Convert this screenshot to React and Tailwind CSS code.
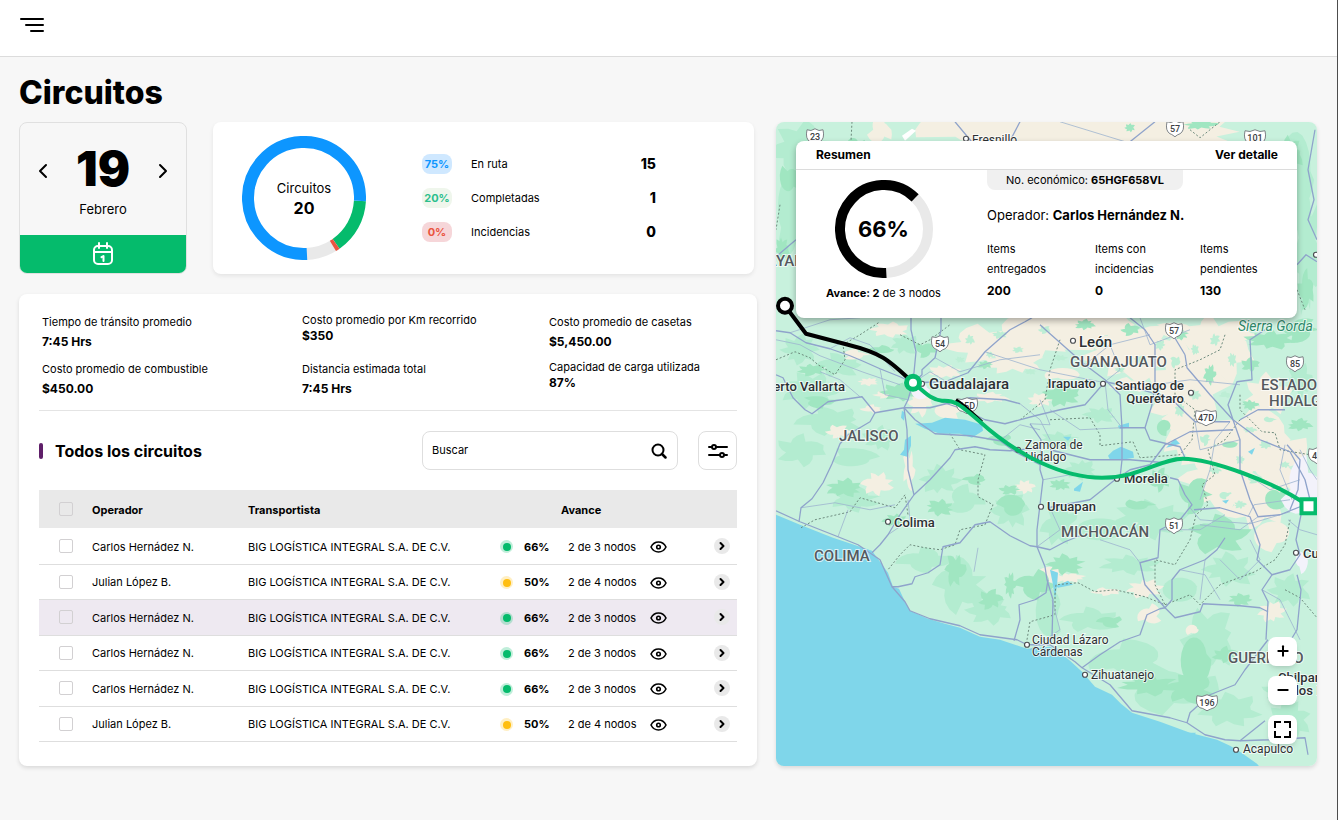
import { useState } from "react";
import { Check, ChevronLeft, ChevronRight, Minus, Plus } from "lucide-react";

const summary = [
    { percent: "75%", label: "En ruta", total: 15, chip: "bg-[#cfe8ff] text-[#0d96ff]" },
    { percent: "20%", label: "Completadas", total: 1, chip: "bg-[#eff6ec] text-[#2cbf8d]" },
    { percent: "0%", label: "Incidencias", total: 0, chip: "bg-[#f6d6d9] text-[#ea5440]" },
];

const metrics = [
    { label: "Tiempo de tránsito promedio", value: "7:45 Hrs", leading: "leading-5" },
    { label: "Costo promedio por Km recorrido", value: "$350", leading: "leading-4" },
    { label: "Costo promedio de casetas", value: "$5,450.00", leading: "leading-5" },
    { label: "Costo promedio de combustible", value: "$450.00", leading: "leading-5" },
    { label: "Distancia estimada total", value: "7:45 Hrs", leading: "leading-5" },
    { label: "Capacidad de carga utilizada", value: "87%", leading: "leading-4" },
];

const carrier = "BIG LOGÍSTICA INTEGRAL S.A. DE C.V.";

const circuits = [
    { id: 1, operator: "Carlos Hernádez N.", percent: "66%", nodes: "2 de 3 nodos", ok: true },
    { id: 2, operator: "Julian López B.", percent: "50%", nodes: "2 de 4 nodos", ok: false },
    { id: 3, operator: "Carlos Hernádez N.", percent: "66%", nodes: "2 de 3 nodos", ok: true },
    { id: 4, operator: "Carlos Hernádez N.", percent: "66%", nodes: "2 de 3 nodos", ok: true },
    { id: 5, operator: "Carlos Hernádez N.", percent: "66%", nodes: "2 de 3 nodos", ok: true },
    { id: 6, operator: "Julian López B.", percent: "50%", nodes: "2 de 4 nodos", ok: false },
];

const items = [
    { top: "Items", bottom: "entregados", value: 200 },
    { top: "Items con", bottom: "incidencias", value: 0 },
    { top: "Items", bottom: "pendientes", value: 130 },
];

/* ---------- Map data ---------- */

// [x, y, rx, ry]
const sand = [
    [1060, 128, 130, 26], [1150, 132, 90, 22], [985, 130, 60, 22], [880, 130, 12, 16], [1080, 325, 80, 22],
    [985, 345, 44, 18], [1025, 340, 44, 20], [1130, 350, 56, 30], [1010, 362, 30, 12], [1185, 385, 40, 48],
    [1215, 350, 36, 34], [1245, 440, 52, 30], [1222, 480, 44, 34], [1190, 430, 26, 34], [1270, 455, 36, 26],
    [1255, 500, 34, 28], [1270, 395, 24, 20], [1275, 535, 20, 15], [920, 402, 13, 14], [890, 330, 18, 7],
    [877, 484, 15, 12], [909, 470, 6, 20], [872, 409, 11, 4], [838, 432, 12, 7], [1025, 487, 10, 7],
    [1051, 574, 14, 8], [1145, 589, 18, 9], [1150, 615, 12, 10], [1193, 630, 7, 6], [1272, 612, 14, 10],
    [1070, 578, 14, 5], [1105, 592, 14, 4], [950, 410, 16, 8], [990, 398, 18, 5], [1040, 400, 12, 7],
    [1240, 335, 18, 10], [855, 355, 14, 5], [1290, 480, 22, 14], [868, 382, 10, 4], [885, 395, 12, 4],
    [1065, 375, 18, 7], [1130, 385, 20, 7], [945, 372, 16, 7], [1180, 330, 24, 8], [1205, 455, 26, 18],
];

const midGreen = [
    [800, 150, 32, 26], [788, 215, 14, 40], [800, 350, 20, 14], [840, 365, 22, 12], [810, 390, 30, 18],
    [830, 420, 32, 14], [800, 450, 24, 16], [850, 460, 28, 10], [880, 438, 16, 12], [855, 500, 24, 12],
    [1300, 180, 18, 50], [1308, 250, 14, 60], [1150, 520, 36, 20], [1100, 530, 30, 14], [1060, 525, 18, 20],
    [925, 560, 26, 12], [960, 585, 24, 26], [990, 610, 22, 14], [1050, 610, 14, 24], [1090, 620, 26, 12],
    [1130, 660, 40, 18], [1170, 690, 46, 22], [1210, 640, 26, 30], [1230, 710, 30, 16], [1180, 590, 20, 14],
    [1230, 570, 26, 16], [1290, 590, 22, 16], [940, 480, 20, 14], [965, 500, 18, 14], [1010, 510, 18, 18],
    [1080, 470, 16, 10], [1100, 415, 16, 8], [1300, 380, 12, 16], [1060, 440, 18, 8],
    [905, 345, 14, 10], [1130, 565, 28, 10], [1290, 720, 20, 20], [1280, 690, 18, 10],
];

const deepGreen = [
    [790, 180, 10, 16], [782, 250, 7, 12], [855, 150, 10, 16], [900, 392, 20, 9], [812, 370, 14, 6],
    [820, 402, 16, 6], [845, 488, 18, 9], [955, 570, 10, 16], [990, 600, 12, 10], [1035, 585, 20, 14],
    [1012, 508, 14, 12], [1062, 396, 18, 11], [1165, 427, 8, 8], [1195, 495, 16, 18], [1220, 535, 30, 18],
    [1065, 565, 18, 10], [1060, 485, 10, 6], [1195, 660, 14, 24], [1150, 685, 30, 10], [1190, 690, 24, 14],
    [1110, 622, 12, 6], [1225, 655, 12, 8], [1270, 340, 24, 9], [1300, 330, 18, 12], [1290, 155, 14, 18],
    [1306, 290, 8, 20], [1240, 160, 24, 10], [1200, 125, 16, 5], [1130, 128, 5, 4], [1250, 365, 9, 7],
    [1210, 375, 6, 10], [1250, 405, 8, 5], [925, 350, 10, 8], [985, 365, 8, 4], [1000, 440, 12, 6],
    [1130, 330, 9, 6], [1085, 325, 10, 5], [1180, 335, 8, 5], [940, 508, 14, 8], [895, 520, 12, 6],
    [1160, 480, 10, 12], [1230, 445, 10, 4], [1275, 498, 12, 12], [1140, 505, 14, 6], [1010, 490, 10, 5],
    [1300, 425, 12, 6], [880, 350, 12, 4], [975, 480, 12, 5], [1240, 600, 12, 6], [1010, 585, 6, 12],
];

// Farmland specks over the sandy plains
const specks = [
    [1000, 335, 7, 4], [1018, 350, 6, 3], [1045, 330, 6, 4], [1100, 345, 8, 3], [1060, 358, 7, 3],
    [1140, 360, 6, 4], [1160, 345, 5, 5], [1175, 362, 5, 6], [1195, 395, 6, 5], [1180, 410, 5, 7],
    [1215, 340, 5, 6], [1232, 360, 4, 7], [1225, 395, 6, 3], [1250, 430, 7, 3], [1265, 445, 6, 4],
    [1240, 460, 4, 5], [1215, 470, 6, 4], [1205, 440, 5, 6], [1225, 495, 6, 4], [1255, 480, 8, 4],
    [1240, 505, 6, 4], [1270, 420, 6, 3], [1290, 400, 5, 5], [1285, 465, 5, 3], [970, 340, 5, 5],
    [990, 355, 4, 3], [1030, 372, 6, 3], [960, 360, 5, 3], [1120, 370, 5, 3], [1195, 350, 4, 5],
];

const highways = [
    "776,331 790,333 806,343 830,349 850,356 862,361 880,369 900,377 913,383",
    "913,383 916,352 911,330 911,318",
    "913,383 922,375 922,370 935,358 941,330 941,318",
    "913,383 945,382 968,373 985,352 1010,330 1025,322 1032,318",
    "913,383 935,400 965,410 985,420 1005,424 1035,416 1060,410 1085,405 1105,382",
    "776,375 783,378 793,398 805,410 812,414 828,402 862,397 875,413 870,422 848,435 840,444 832,464 823,483 812,499 801,508 799,522",
    "913,383 908,400 904,408 875,413",
    "904,408 907,430 908,470 914,495 900,515 888,535 880,545 872,553",
    "904,408 915,420 935,434 970,436 1000,441 1015,452 1040,465",
    "904,408 930,408 970,398 1005,400 1020,404",
    "914,495 930,480 950,458 955,450 975,447 990,450 1010,451 1040,448",
    "776,511 800,522 838,537 858,545 880,560 892,587 898,587 912,584 915,577 928,573 940,565 943,547 960,543 975,525 990,522 1010,536 1030,546 1037,547",
    "892,587 905,602 910,611 930,619 960,626 980,635 1017,640 1027,645 1050,645 1075,662 1082,668 1110,685 1132,711 1170,718 1187,723 1205,735 1225,740 1240,741 1265,721",
    "1037,547 1037,530 1043,480 1040,470 1041,440 1030,424",
    "1037,547 1045,567 1047,580 1053,600 1052,638",
    "1014,641 1020,620 1019,605 1035,600 1046,593 1048,580",
    "1037,547 1050,550 1065,542 1080,536",
    "1082,668 1100,655 1120,642 1140,635 1147,615 1160,609 1165,608 1175,618 1200,612 1203,604 1240,606 1260,608 1268,612",
    "1165,608 1172,600 1172,580 1180,570 1205,560 1217,550 1225,538",
    "1165,608 1145,585 1140,563 1158,558 1160,530 1180,520 1192,505 1185,495 1178,480 1170,478",
    "1040,325 1050,334 1085,365 1105,380 1120,395 1122,428 1122,460 1120,478",
    "1120,428 1145,428 1152,405 1155,385 1155,345 1145,330 1130,318",
    "1105,382 1135,388 1170,398 1195,422 1230,422",
    "1145,428 1150,440 1180,447 1185,458",
    "1185,355 1187,368 1210,395 1233,420 1260,440 1290,452 1305,480 1310,500",
    "1173,335 1185,355",
    "1233,420 1228,405 1237,382 1252,380 1250,340 1265,330",
    "1233,420 1240,440 1240,470 1250,500 1258,517 1280,515 1300,507",
    "1048,508 1090,500 1115,480 1130,470 1150,465 1165,445 1190,432 1233,430",
    "1050,450 1090,460 1130,460 1165,463 1180,459",
    "1194,510 1220,508 1250,517 1260,545 1257,560 1272,575 1290,570 1300,555 1296,540 1302,510",
    "1272,575 1262,590 1268,602 1266,640",
    "1297,575 1301,590 1297,630 1285,650",
    "1187,723 1190,713 1210,695 1235,685 1245,670 1268,640",
    "1240,741 1270,740 1305,738 1308,755",
    "955,122 970,140 1000,180",
    "1020,122 1010,141",
    "1155,122 1130,142",
    "1315,130 1308,170 1314,200 1308,220 1317,240",
    "1297,265 1306,255 1317,262",
    "776,257 790,245 796,240",
    "1240,420 1258,410 1285,410",
    "1287,445 1300,460 1298,490 1290,510",
];

const backRoads = [
    "790,333 830,320 860,318", "830,349 850,338 870,345 895,372", "880,369 885,395 908,400", "860,397 840,380 820,372",
    "935,358 960,372 1000,360 1040,355", "1000,441 1020,425 1040,430", "985,352 1040,370 1100,382", "1085,365 1110,345 1150,335",
    "1155,385 1190,380 1240,385", "1140,318 1150,345 1190,330", "1195,422 1200,450 1240,440", "1050,508 1060,530 1037,547",
    "1043,480 1070,475 1115,480", "1050,410 1080,430 1120,428", "848,510 838,537", "801,508 835,503 870,510 895,505",
    "888,535 910,520 908,500", "978,548 974,572", "1160,530 1200,530 1225,515", "1180,570 1205,575 1220,600",
    "1220,560 1240,580 1260,560 1250,540", "1240,470 1270,490 1300,480", "1230,422 1215,440 1210,470 1200,500", "1262,590 1280,600 1300,640",
    "1100,540 1130,550 1140,563", "1205,560 1200,600", "1060,122 1135,145", "1258,517 1240,530 1200,525", "1030,650 1060,630 1052,600",
    "776,340 800,345 820,356 862,372 900,385", "913,383 930,372 960,390 1000,388", "1020,404 1040,420 1050,440",
    "1190,508 1200,520 1250,524 1290,512", "1248,517 1254,505 1290,500", "1285,445 1280,470 1292,500", "1300,450 1310,470 1317,480",
    "1288,520 1300,530 1317,535", "1105,382 1108,410 1122,428", "1110,345 1120,370 1105,382", "1040,400 1050,425 1030,424",
];

const stateBorders = [
    "776,360 795,352 810,358 818,365 835,375 845,360 843,345 860,335 880,322",
    "900,335 920,345 930,340 950,325", "780,205 776,230", "852,122 851,141",
    "950,434 960,450 985,455 978,480 978,497 993,505 985,525 960,530 955,545 940,550 925,548 910,545 900,555 888,570",
    "801,528 815,520 850,512 860,498 895,508 905,495 908,515", "1020,420 1045,400 1050,370 1060,340",
    "1050,420 1090,418 1100,435 1100,446 1133,442 1140,458 1180,455 1192,440 1195,410 1175,395 1175,370 1200,360 1220,350 1225,335",
    "1240,420 1225,440 1208,450 1215,475 1202,485 1208,505 1196,515 1190,540 1175,565 1155,560 1155,585 1165,605",
    "1055,595 1056,585 1078,583 1095,592 1115,590 1145,597 1165,605", "1027,640 1030,622 1055,615 1055,595",
    "1165,605 1190,595 1200,605 1220,585 1255,572 1275,560 1285,545 1290,520", "1240,395 1240,410 1262,432 1275,433 1280,450 1310,455",
    "1285,590 1300,598 1317,618", "1190,130 1200,138 1220,122", "1297,290 1305,310",
];

const water = [
    "915,424 932,423 945,418 965,420 982,425 983,431 972,438 960,434 940,434 925,429",
    "1108,456 1113,451 1121,447 1133,452 1134,458 1122,460 1110,460",
    "905,440 911,436 911,446 907,457 900,455 904,450",
    "1118,426 1129,423 1129,428 1119,429", "1050,570 1058,573 1057,586 1055,600 1053,585",
    "1056,586 1068,581 1073,585 1058,588", "1166,448 1175,439 1180,444 1170,447", "1074,489 1083,482 1080,492 1074,491",
    "902,411 905,413 904,421 901,418", "1222,501 1229,500 1226,504", "1248,452 1255,448 1252,455", "1188,733 1196,733 1193,737",
    "1063,437 1071,437 1068,441",
];

const coast = "M776 515 L800 525 L833 538 L872 551 L888 573 L893 587 L899 589 L905 602 L910 611 L928 619 L945 624 L960 628 L980 637 L1000 640 L1012 644 L1027 649 L1050 647 L1060 653 L1070 661 L1082 672 L1095 687 L1112 695 L1121 704 L1132 713 L1160 722 L1190 733 L1217 740 L1230 746 L1240 752 L1257 764 L1262 770 L770 770 L770 513 Z";

const cities = [
    { x: 1073, y: 341, lx: 1079, ly: 347, size: 15, weight: 500, lines: ["León"] },
    { x: 922, y: 384, lx: 929, ly: 389, size: 15, weight: 500, lines: ["Guadalajara"] },
    { x: 1103, y: 384, lx: 1096, ly: 388, size: 13, weight: 500, end: true, lines: ["Irapuato"] },
    { x: 1191, y: 393, lx: 1184, ly: 390, size: 13, weight: 500, end: true, lines: ["Santiago de", "Querétaro"] },
    { x: 770, y: 384, lx: 845, ly: 391, size: 13, weight: 500, end: true, lines: ["Puerto Vallarta"] },
    { x: 1018, y: 450, lx: 1025, ly: 449, size: 12, weight: 400, lines: ["Zamora de", "Hidalgo"] },
    { x: 1117, y: 479, lx: 1124, ly: 483, size: 13, weight: 500, lines: ["Morelia"] },
    { x: 1041, y: 507, lx: 1047, ly: 511, size: 13, weight: 500, lines: ["Uruapan"] },
    { x: 888, y: 522, lx: 894, ly: 527, size: 13, weight: 500, lines: ["Colima"] },
    { x: 1296, y: 553, lx: 1303, ly: 558, size: 13, weight: 500, lines: ["Cuernavaca"] },
    { x: 1027, y: 645, lx: 1032, ly: 644, size: 12, weight: 400, lines: ["Ciudad Lázaro", "Cárdenas"] },
    { x: 1085, y: 675, lx: 1091, ly: 679, size: 12, weight: 400, lines: ["Zihuatanejo"] },
    { x: 1272, y: 690, lx: 1278, ly: 682, size: 13, weight: 500, lines: ["Chilpancingo", "de los Bravo"] },
    { x: 1236, y: 750, lx: 1243, ly: 753, size: 12, weight: 400, lines: ["Acapulco"] },
    { x: 966, y: 139, lx: 972, ly: 144, size: 12, weight: 400, lines: ["Fresnillo"] },
    { x: 1316, y: 255, lx: 1322, ly: 255, size: 12, weight: 400, lines: [] },
];

const states = [
    { name: "NAYARIT", x: 756, y: 266 },
    { name: "JALISCO", x: 839, y: 441 },
    { name: "COLIMA", x: 814, y: 561 },
    { name: "GUANAJUATO", x: 1070, y: 367 },
    { name: "MICHOACÁN", x: 1061, y: 537 },
    { name: "ESTADO DE", x: 1261, y: 390 },
    { name: "HIDALGO", x: 1269, y: 406 },
    { name: "GUERRERO", x: 1228, y: 663 },
];

const shields = [
    { n: "23", x: 815, y: 137, w: 16 },
    { n: "57", x: 1175, y: 129, w: 16 },
    { n: "101", x: 1255, y: 138, w: 20 },
    { n: "54", x: 940, y: 344, w: 16 },
    { n: "15D", x: 967, y: 406, w: 20 },
    { n: "57", x: 1174, y: 331, w: 16 },
    { n: "85", x: 1295, y: 364, w: 16 },
    { n: "47D", x: 1206, y: 418, w: 20 },
    { n: "45", x: 1317, y: 456, w: 16 },
    { n: "51", x: 1174, y: 526, w: 16 },
    { n: "196", x: 1207, y: 703, w: 20 },
];

// Irregular outline around a centre, the same on every render
function patch([x, y, rx, ry]) {
    const points = [];
    for (let i = 0; i < 22; i++) {
        const noise = Math.abs(Math.sin(x * 12.9 + y * 78.2 + i * 37.7) * 437.5) % 1;
        const radius = 0.55 + noise * 0.65;
        const angle = (i / 22) * Math.PI * 2;
        points.push(`${(x + Math.cos(angle) * rx * radius).toFixed(1)},${(y + Math.sin(angle) * ry * radius).toFixed(1)}`);
    }
    return points.join(" ");
}

/* ---------- Icons ---------- */

function MenuIcon() {
    return (
        <svg width="26" height="16" viewBox="0 0 26 16" fill="none" stroke="#000" strokeWidth="2" strokeLinecap="round">
            <path d="M2 2h22M7 8h17M12 14h12" />
        </svg>
    );
}

function CalendarIcon() {
    return (
        <svg width="22" height="24" viewBox="0 0 22 24" fill="none" stroke="#fff" strokeWidth="2" strokeLinecap="round">
            <rect x="2" y="4" width="18" height="18" rx="4" />
            <path d="M2 10h18M7 1v5M15 1v5" />
            <path d="M9.500 15.200l2-1.200v5" strokeLinejoin="round" />
        </svg>
    );
}

function SearchIcon() {
    return (
        <svg width="16" height="16" viewBox="0 0 16 16" fill="none" stroke="#000" strokeWidth="2" strokeLinecap="round">
            <circle cx="7" cy="7" r="5.500" />
            <path d="M11 11l3.500 3.500" strokeWidth="2.500" />
        </svg>
    );
}

function FilterIcon() {
    return (
        <svg width="20" height="16" viewBox="0 0 20 16" fill="none" stroke="#000" strokeWidth="2" strokeLinecap="round">
            <path d="M1 4h2.500M8.500 4H19M1 12h10.500M16.500 12H19" />
            <circle cx="6" cy="4" r="2" />
            <circle cx="14" cy="12" r="2" />
        </svg>
    );
}

function EyeIcon() {
    return (
        <svg width="17" height="12" viewBox="0 0 17 12" fill="none" stroke="#000" strokeWidth="1.600">
            <path d="M1 6c1.500-3 4.200-5 7.500-5S14.500 3 16 6c-1.500 3-4.200 5-7.500 5S2.500 9 1 6z" strokeLinejoin="round" />
            <circle cx="8.500" cy="6" r="1.800" />
        </svg>
    );
}

function ExpandIcon() {
    return (
        <svg width="17" height="17" viewBox="0 0 17 17" fill="none" stroke="#000" strokeWidth="2">
            <path d="M1 7V1h6M10 1h6v6M16 10v6h-6M7 16H1v-6" />
        </svg>
    );
}

/* ---------- Pieces ---------- */

function Arc({ size, width, from, sweep, color }) {
    const c = size / 2;
    return (
        <circle
            cx={c}
            cy={c}
            r={c - width / 2}
            fill="none"
            stroke={color}
            strokeWidth={width}
            pathLength="360"
            strokeDasharray={`${sweep} ${360 - sweep}`}
            transform={`rotate(${from} ${c} ${c})`}
        />
    );
}

function Checkbox({ label }) {
    return (
        <span className="grid w-3.5 h-3.5">
            <input
                type="checkbox"
                aria-label={label}
                className="peer col-start-1 row-start-1 appearance-none w-3.5 h-3.5 rounded-xs border border-[#d2d0d2]"
            />
            <Check className="col-start-1 row-start-1 hidden peer-checked:block w-3.5 h-3.5 pointer-events-none" />
        </span>
    );
}

function DateCard() {
    const [day, setDay] = useState(19);

    return (
        <div className="w-[168px] shrink-0 flex flex-col rounded-lg border border-[#e0e0e0] overflow-hidden">
            <div className="flex-1 flex items-center justify-between px-[11px]">
                <button type="button" aria-label="Día anterior" onClick={() => setDay(day - 1)} className="pb-4">
                    <ChevronLeft className="w-6 h-6" />
                </button>
                <div className="text-center pt-2">
                    <div className="text-5xl leading-[52px] font-black">{day}</div>
                    <div className="text-[13px] leading-7">Febrero</div>
                </div>
                <button type="button" aria-label="Día siguiente" onClick={() => setDay(day + 1)} className="pb-4">
                    <ChevronRight className="w-6 h-6" />
                </button>
            </div>
            <button type="button" aria-label="Abrir calendario" className="h-[38px] flex items-center justify-center bg-[#05bb6c]">
                <CalendarIcon />
            </button>
        </div>
    );
}

function SummaryCard() {
    return (
        <div className="flex-1 flex items-center gap-14 pl-[29px] bg-white rounded-lg shadow-[0_2px_4px_rgba(0,0,0,0.08)]">
            <div className="grid place-items-center w-[124px] h-[124px] shrink-0">
                <svg className="col-start-1 row-start-1" width="124" height="124" viewBox="0 0 124 124">
                    <Arc size={124} width={12} from={57} sweep={31} color="#e9e9e9" />
                    <Arc size={124} width={12} from={3} sweep={52} color="#05bb6c" />
                    <Arc size={124} width={12} from={55} sweep={4} color="#ea5440" />
                    <Arc size={124} width={12} from={87} sweep={276} color="#0d96ff" />
                </svg>
                <div className="col-start-1 row-start-1 text-center">
                    <div className="text-[13px] leading-5">Circuitos</div>
                    <div className="text-base leading-5 font-bold">20</div>
                </div>
            </div>
            <ul className="w-[234px]">
                {summary.map((row) => (
                    <li key={row.label} className="h-[34px] flex items-center">
                        <span className={`w-[30px] h-5 mr-[19px] flex items-center justify-center rounded-lg text-[11px] font-bold ${row.chip}`}>
                            {row.percent}
                        </span>
                        <span className="flex-1 text-[11px]">{row.label}</span>
                        <span className="text-sm font-extrabold">{row.total}</span>
                    </li>
                ))}
            </ul>
        </div>
    );
}

function CircuitsTable() {
    return (
        <table className="w-full table-fixed text-left text-[11px]">
            <thead>
                <tr className="h-[38px] bg-[#e9e9e9]">
                    <th className="w-[53px] pl-5"><Checkbox label="Seleccionar todos" /></th>
                    <th className="w-[156px] pt-0.5 font-bold">Operador</th>
                    <th className="pt-0.5 font-bold">Transportista</th>
                    <th className="w-[217px] pl-16 pt-0.5 font-bold">Avance</th>
                    <th className="w-[23px]"></th>
                </tr>
            </thead>
            <tbody>
                {circuits.map((row) => (
                    <tr
                        key={row.id}
                        className={`odd:h-9 even:h-[35px] border-b border-[#dedede] ${row.id === 3 ? "bg-[#eee9f1]" : ""}`}
                    >
                        <td className="pl-5"><Checkbox label={`Seleccionar circuito ${row.id}`} /></td>
                        <td className="pt-0.5">{row.operator}</td>
                        <td className="pt-0.5 whitespace-nowrap">{carrier}</td>
                        <td className="pt-0.5">
                            <div className="flex items-center pl-[3px]">
                                <span className={`w-[13px] h-[13px] mr-[11px] grid place-items-center rounded-full ${row.ok ? "bg-[#05bb6c]/25" : "bg-[#ffbe10]/25"}`}>
                                    <span className={`w-2 h-2 rounded-full ${row.ok ? "bg-[#05bb6c]" : "bg-[#ffbe10]"}`}></span>
                                </span>
                                <span className="w-11 font-bold">{row.percent}</span>
                                <span className="w-[82px] whitespace-nowrap">{row.nodes}</span>
                                <button type="button" aria-label="Ver circuito"><EyeIcon /></button>
                            </div>
                        </td>
                        <td>
                            <button type="button" aria-label="Abrir detalle" className="w-4 h-4 grid place-items-center rounded-full bg-[#e9e9e9]">
                                <ChevronRight className="w-3 h-3" strokeWidth={4} />
                            </button>
                        </td>
                    </tr>
                ))}
            </tbody>
        </table>
    );
}

function MainCard() {
    return (
        <div className="bg-white rounded-lg shadow-[0_2px_4px_rgba(0,0,0,0.12)] px-5 pt-[18px] pb-6">
            {/* Metrics */}
            <dl className="grid grid-cols-[260fr_247fr_188fr] gap-y-[7px] pl-[3px] h-[98px] content-start text-xs">
                {metrics.map((m) => (
                    <div key={m.label} className={`h-10 whitespace-nowrap ${m.leading}`}>
                        <dt className="text-[11px]">{m.label}</dt>
                        <dd className="font-bold">{m.value}</dd>
                    </div>
                ))}
            </dl>

            {/* Title and search */}
            <div className="flex items-center border-t border-[#e4e4e4] py-5">
                <span className="w-1 h-4 mr-3 rounded-xs bg-[#5f1f69]"></span>
                <h2 className="flex-1 text-base font-bold">Todos los circuitos</h2>
                <label className="w-64 h-[39px] flex items-center rounded-lg border border-[#dedede] pl-[9px] pr-2.5">
                    <input
                        type="text"
                        aria-label="Buscar"
                        placeholder="Buscar"
                        className="flex-1 min-w-0 text-[11px] placeholder:text-black outline-none"
                    />
                    <SearchIcon />
                </label>
                <button type="button" aria-label="Filtros" className="w-[39px] h-[39px] ml-5 flex items-center justify-center rounded-lg border border-[#dedede]">
                    <FilterIcon />
                </button>
            </div>

            <CircuitsTable />
        </div>
    );
}

function MapDrawing() {
    return (
        <svg
            className="absolute inset-0 w-full h-full"
            viewBox="776 122 541 644"
            preserveAspectRatio="xMidYMid slice"
            fontFamily="Roboto, sans-serif"
            role="img"
            aria-label="Mapa de la ruta"
        >
            <rect x="700" y="100" width="700" height="700" fill="#c8f1dd" />
            <g fill="#b3ecd0">{midGreen.map((p) => <polygon key={p.join()} points={patch(p)} />)}</g>
            <g fill="#f4efe2">{sand.map((p) => <polygon key={p.join()} points={patch(p)} />)}</g>
            <g fill="#bdeed5">{specks.map((p) => <polygon key={p.join()} points={patch(p)} />)}</g>
            <g fill="#a0e6c1">{deepGreen.map((p) => <polygon key={p.join()} points={patch(p)} />)}</g>
            <polygon points="902,136 912,129 916,131 905,141" fill="#fff" />
            <g fill="#f3f2fb">
                <polygon points={patch([1303, 490, 20, 30])} />
                <polygon points={patch([920, 390, 9, 9])} />
                <polygon points={patch([1300, 560, 7, 12])} />
            </g>
            <path d={coast} fill="#7fd6ea" />
            <g fill="#7fd6ea">{water.map((p) => <polygon key={p} points={p} />)}</g>

            <g fill="none" stroke="#6d8a7d" strokeWidth="1" strokeDasharray="2 2">
                {stateBorders.map((p) => <polyline key={p} points={p} />)}
            </g>
            <g fill="none" stroke="#9db4cf" strokeWidth="0.800" strokeLinejoin="round">
                {backRoads.map((p) => <polyline key={p} points={p} />)}
            </g>
            <g fill="none" stroke="#8fa3cb" strokeWidth="1.300" strokeLinejoin="round">
                {highways.map((p) => <polyline key={p} points={p} />)}
            </g>

            {/* Road shields */}
            {shields.map((s) => (
                <g key={`${s.n}-${s.x}-${s.y}`} transform={`translate(${s.x} ${s.y})`}>
                    <path
                        d={`M${-s.w / 2} -7 q${s.w / 4} 2 ${s.w / 2} -1 q${s.w / 4} 3 ${s.w / 2} 1 q2 9 -3 12 q-3 1 ${3 - s.w / 2} 3 q${-s.w / 4} -3 ${3 - s.w / 2} -3 q-5 -3 -3 -12z`}
                        fill="#fff"
                        stroke="#7d8286"
                        strokeWidth="1"
                    />
                    <text y="3" textAnchor="middle" fontSize="9" fontWeight="500" fill="#3c4043">{s.n}</text>
                </g>
            ))}

            {/* Labels */}
            <g fill="#55595e" fontSize="15" fontWeight="500" stroke="#fff" strokeWidth="2" strokeOpacity="0.700" paintOrder="stroke">
                {states.map((s) => <text key={s.name} x={s.x} y={s.y}>{s.name}</text>)}
            </g>
            <text x="1238" y="331" fontSize="14" fontStyle="italic" fill="#2f8a6b" stroke="#fff" strokeWidth="2" strokeOpacity="0.700" paintOrder="stroke">
                Sierra Gorda
            </text>
            {cities.map((c) => (
                <g key={`${c.x}-${c.y}`}>
                    <circle cx={c.x} cy={c.y} r="2.500" fill="#fff" stroke="#4a4d51" strokeWidth="1.200" />
                    <text
                        fontSize={c.size}
                        fontWeight={c.weight}
                        textAnchor={c.end ? "end" : "start"}
                        fill="#2d3033"
                        stroke="#fff"
                        strokeWidth="2"
                        strokeOpacity="0.700"
                        paintOrder="stroke"
                    >
                        {c.lines.map((line, i) => <tspan key={line} x={c.lx} y={c.ly + i * c.size}>{line}</tspan>)}
                    </text>
                </g>
            ))}

            {/* Route */}
            <path d="M785 306 L806 334 L848 345 C880 353 888 359 913 383" fill="none" stroke="#000" strokeWidth="4" strokeLinejoin="round" />
            <path d="M956 400 C964 405 972 413 982 422" fill="none" stroke="#000" strokeWidth="3" />
            <path
                d="M913 383 C924 391 930 400 942 401 C954 400 958 403 980 422 C1020 458 1065 478 1102 478 C1140 478 1160 459 1183 459 C1210 459 1275 482 1308 506"
                fill="none"
                stroke="#05bb6c"
                strokeWidth="4"
            />
            <circle cx="785" cy="306" r="7" fill="#fff" stroke="#000" strokeWidth="4" />
            <circle cx="913" cy="383" r="6.500" fill="#fff" stroke="#05bb6c" strokeWidth="5" />
            <rect x="1301.500" y="499.500" width="14" height="14" fill="#fff" stroke="#05bb6c" strokeWidth="4" />
        </svg>
    );
}

function RoutePanel() {
    return (
        <section className="absolute inset-x-5 top-[19px] bg-white rounded-lg shadow-[0_3px_6px_rgba(0,0,0,0.3)]">
            <header className="h-[29px] flex items-center justify-between pl-5 pr-[19px] border-b border-[#dcdcdc] text-xs font-bold">
                <h2>Resumen</h2>
                <a href="#detalle">Ver detalle</a>
            </header>
            <div className="flex h-[148px]">
                <div className="w-[191px] shrink-0 flex flex-col items-center pt-2.5 pr-4">
                    <div className="grid place-items-center w-[98px] h-[98px]">
                        <svg className="col-start-1 row-start-1" width="98" height="98" viewBox="0 0 98 98">
                            <Arc size={98} width={10} from={314} sweep={134} color="#e9e9e9" />
                            <Arc size={98} width={10} from={87} sweep={228} color="#000" />
                        </svg>
                        <span className="col-start-1 row-start-1 text-[22px] font-bold">66%</span>
                    </div>
                    <p className="pt-1.5 text-[11px] leading-[18px]"><b>Avance: 2</b> de 3 nodos</p>
                </div>
                <div className="flex-1">
                    <p className="w-49 h-5 rounded-b-lg bg-[#f0f0f0] text-center text-[11px] leading-5">
                        No. económico: <b>65HGF658VL</b>
                    </p>
                    <p className="pt-[15px] text-[13px] leading-5">
                        Operador: <b>Carlos Hernández N.</b>
                    </p>
                    <dl className="grid grid-cols-[108px_105px_1fr] pt-3.5 text-[11px] leading-5">
                        {items.map((item) => (
                            <div key={item.bottom}>
                                <dt>{item.top}<br />{item.bottom}</dt>
                                <dd className="pt-0.5 text-xs leading-5 font-bold">{item.value}</dd>
                            </div>
                        ))}
                    </dl>
                </div>
            </div>
        </section>
    );
}

function RouteMap() {
    const button = "w-[29px] h-[29px] grid place-items-center rounded-lg bg-white shadow-md";

    return (
        <div className="relative rounded-lg overflow-hidden shadow-[0_2px_4px_rgba(0,0,0,0.12)]">
            <MapDrawing />
            <RoutePanel />
            <div className="absolute right-5 bottom-[22px] flex flex-col gap-2.5">
                <button type="button" aria-label="Acercar" className={button}><Plus className="w-4 h-4" strokeWidth={3} /></button>
                <button type="button" aria-label="Alejar" className={button}><Minus className="w-4 h-4" strokeWidth={3} /></button>
                <button type="button" aria-label="Pantalla completa" className={button}><ExpandIcon /></button>
            </div>
        </div>
    );
}

export default function App() {
    return (
        <div className="min-h-screen bg-[#f7f7f7] text-black font-[Inter,sans-serif] border-r border-[#4d4d4d]">
            <header className="h-[57px] flex items-center pl-[19px] pb-1.5 bg-white border-b border-[#dcdcdc]">
                <button type="button" aria-label="Abrir menú"><MenuIcon /></button>
            </header>

            <main className="pl-[19px] pr-5 pt-4">
                <h1 className="mb-[9px] text-[32px] leading-10 font-extrabold">Circuitos</h1>

                <div className="grid grid-cols-[738fr_541fr] gap-[19px]">
                    <div className="flex flex-col gap-5">
                        <div className="flex gap-[26px] h-[152px] pr-[3px]">
                            <DateCard />
                            <SummaryCard />
                        </div>
                        <MainCard />
                    </div>
                    <RouteMap />
                </div>
            </main>
        </div>
    );
}
